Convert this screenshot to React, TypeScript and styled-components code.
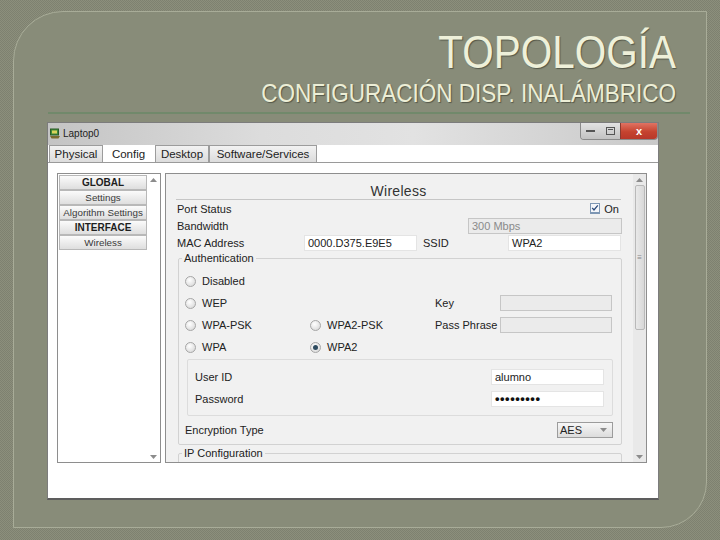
import styled, { createGlobalStyle } from 'styled-components'

const GlobalStyle = createGlobalStyle`
  html, body { margin: 0; padding: 0; }
  body {
    width: 720px;
    height: 540px;
    overflow: hidden;
    font-family: "Liberation Sans", Arial, sans-serif;
  }
`

const Slide = styled.div`
  width: 720px;
  height: 540px;
  box-sizing: border-box;
  padding: 11px 13px 12px 13px;
  background: repeating-conic-gradient(#8c8f7c 0 25%, #7e8170 0 50%) 0 0 / 2px 2px;
`

const Frame = styled.div`
  height: 100%;
  box-sizing: border-box;
  border: 1px solid #a8ac98;
  border-radius: 50px 0 46px 0;
  background: #888c79;
  display: flex;
  flex-direction: column;
`

const Title = styled.h1`
  margin: 17px 30px 0 0;
  font-size: 46px;
  line-height: 46px;
  font-weight: 400;
  text-align: right;
  color: #eef0d9;
  text-shadow: 1px 1px 1px #55584a;
  transform: scaleX(0.88);
  transform-origin: right center;
`

const Subtitle = styled.h2`
  margin: 6px 30px 0 0;
  font-size: 25px;
  line-height: 25px;
  font-weight: 400;
  text-align: right;
  color: #eceed6;
  text-shadow: 1px 1px 1px #55584a;
  transform: scaleX(0.9);
  transform-origin: right center;
`

const Rule = styled.div`
  margin: 6px 16px 0 34px;
  height: 2px;
  background: #71896b;
`

const Window = styled.div`
  margin: 8px 0 0 33px;
  width: 612px;
  height: 378px;
  box-sizing: border-box;
  border: 1px solid #7c7c7c;
  border-bottom: 2px solid #5d5d5d;
  background: #ffffff;
  display: flex;
  flex-direction: column;
  font-size: 11px;
  color: #222;
`

const TitleBar = styled.div`
  height: 22px;
  flex-shrink: 0;
  display: flex;
  align-items: flex-start;
  background: linear-gradient(90deg, #c4c4c4 0%, #dcdcdc 35%, #e2e2e2 60%, #c9c9c9 100%);
`

const TitleText = styled.div`
  display: flex;
  align-items: center;
  gap: 3px;
  height: 20px;
  padding-left: 2px;
  font-size: 10px;
  color: #222;
  flex: 1;
`

const WinButtons = styled.div`
  display: flex;
  height: 16px;
  border: 1px solid #8a8a8a;
  border-top: none;
  border-radius: 0 0 4px 4px;
  overflow: hidden;
`

const WinButton = styled.div<{ $close?: boolean; $w: number }>`
  width: ${p => p.$w}px;
  display: flex;
  align-items: center;
  justify-content: center;
  background: ${p => p.$close
    ? 'linear-gradient(#e07363, #c5432f 55%, #b8382a)'
    : 'linear-gradient(#e2e2e2, #c2c2c2)'};
  border-left: ${p => p.$close ? '1px solid #8a3a30' : 'none'};
  color: #fff;
  font-weight: 700;
  font-size: 11px;
`

const TabStrip = styled.div`
  height: 17px;
  flex-shrink: 0;
  display: flex;
  padding-left: 1px;
  border-bottom: 1px solid #9a9a9a;
`

const Tab = styled.div<{ $active?: boolean; $w: number }>`
  width: ${p => p.$w}px;
  box-sizing: border-box;
  margin-right: ${p => p.$active ? '1px' : '0'};
  border: 1px solid ${p => p.$active ? 'transparent' : '#9c9c9c'};
  border-bottom: none;
  background: ${p => p.$active ? '#ffffff' : 'linear-gradient(#f2f2f2, #dcdcdc)'};
  display: flex;
  align-items: center;
  justify-content: center;
  font-size: 11.5px;
  color: #222;
`

const Content = styled.div`
  display: flex;
  gap: 4px;
  padding: 10px 0 0 9px;
`

const Sidebar = styled.div`
  width: 104px;
  height: 290px;
  box-sizing: border-box;
  border: 1px solid #8e8e8e;
  display: flex;
`

const NavList = styled.div`
  width: 89px;
  padding: 1px 0 0 1px;
  display: flex;
  flex-direction: column;
`

const NavButton = styled.div<{ $bold?: boolean }>`
  height: 15px;
  flex-shrink: 0;
  box-sizing: border-box;
  border: 1px solid #b8b8b8;
  background: linear-gradient(#fbfbfb, #dedede);
  display: flex;
  align-items: center;
  justify-content: center;
  font-size: ${p => p.$bold ? '10px' : '9.8px'};
  font-weight: ${p => p.$bold ? 700 : 400};
  color: ${p => p.$bold ? '#1e1e1e' : '#3a3a3a'};
  white-space: nowrap;
`

const ScrollCol = styled.div<{ $bg?: string }>`
  width: 13px;
  margin-left: auto;
  display: flex;
  flex-direction: column;
  align-items: center;
  justify-content: space-between;
  padding: 4px 0 3px;
  box-sizing: border-box;
  background: ${p => p.$bg || 'transparent'};
`

const Thumb = styled.div`
  width: 10px;
  height: 145px;
  margin-top: 3px;
  box-sizing: border-box;
  border: 1px solid #b9b9b9;
  border-radius: 2px;
  background: linear-gradient(90deg, #e9e9e9, #d8d8d8);
  display: flex;
  align-items: center;
  justify-content: center;
  font-size: 8px;
  color: #888;
`

const Panel = styled.div`
  width: 482px;
  height: 290px;
  box-sizing: border-box;
  border: 1px solid #8e8e8e;
  background: #f1f1f1;
  display: flex;
`

const Main = styled.div`
  flex: 1;
  overflow: hidden;
  display: flex;
  flex-direction: column;
  & > * { flex-shrink: 0; }
`

const Heading = styled.div`
  height: 26px;
  box-sizing: border-box;
  margin: 0 12px 0 10px;
  padding-top: 10px;
  border-bottom: 1px solid #c6c6c6;
  text-align: center;
  font-size: 14px;
  line-height: 15px;
  letter-spacing: 0.3px;
  color: #333;
`

const Row = styled.div`
  height: 17px;
  margin: 0 11px;
  display: flex;
  align-items: center;
  justify-content: space-between;
`

const GridRow = styled.div`
  height: 17px;
  margin: 0 11px;
  display: grid;
  grid-template-columns: 127px 113px 6px 85px 113px;
  align-items: center;
`

const Field = styled.div<{ $disabled?: boolean; $w?: number }>`
  ${p => p.$w ? `width: ${p.$w}px;` : ''}
  height: 16px;
  box-sizing: border-box;
  border: 1px solid ${p => p.$disabled ? '#c6c6c6' : '#e4e4e4'};
  background: ${p => p.$disabled ? '#ebebeb' : '#ffffff'};
  color: ${p => p.$disabled ? '#8a8a8a' : '#222'};
  padding-left: 3px;
  display: flex;
  align-items: center;
  font-size: 11px;
`

const CheckWrap = styled.div`
  display: flex;
  align-items: center;
  gap: 4px;
  padding-right: 3px;
`

const Group = styled.fieldset<{ $top: number }>`
  margin: ${p => p.$top}px 0 0 12px;
  width: 444px;
  box-sizing: border-box;
  padding: 5px 8px 6px 6px;
  border: 1px solid #d2d2d2;
  border-radius: 2px;
  min-width: 0;
`

const Legend = styled.legend`
  padding: 0 2px;
  margin-left: -3px;
  font-size: 11px;
  line-height: 13px;
  color: #222;
`

const RadioGrid = styled.div`
  display: grid;
  grid-template-columns: 125px 125px 65px 112px;
  grid-auto-rows: 22px;
  align-items: center;
`

const Option = styled.div`
  display: flex;
  align-items: center;
  gap: 6px;
`

const Radio = styled.span<{ $on?: boolean }>`
  width: 11px;
  height: 11px;
  box-sizing: border-box;
  border-radius: 50%;
  border: 1px solid #a6a6a6;
  background: radial-gradient(circle at 40% 35%, #ffffff, #d2d2d2);
  display: inline-flex;
  align-items: center;
  justify-content: center;
  &::after {
    content: '';
    width: 5px;
    height: 5px;
    border-radius: 50%;
    background: ${p => p.$on ? '#2e4b60' : 'transparent'};
  }
`

const UserBox = styled.div`
  margin: 1px 0 0 2px;
  box-sizing: border-box;
  border: 1px solid #dcdcdc;
  border-radius: 2px;
  padding: 8px 8px 8px 7px;
  display: grid;
  grid-template-columns: 1fr 113px;
  grid-auto-rows: 17px;
  row-gap: 5px;
  align-items: center;
`

const Dots = styled.span`
  font-size: 13px;
  font-weight: 700;
  letter-spacing: 0.5px;
  color: #111;
`

const EncRow = styled.div`
  margin-top: 6px;
  display: flex;
  align-items: center;
  justify-content: space-between;
`

const Select = styled.div`
  width: 56px;
  height: 16px;
  box-sizing: border-box;
  border: 1px solid #9c9c9c;
  background: linear-gradient(#f7f7f7, #dcdcdc);
  display: flex;
  align-items: center;
  justify-content: space-between;
  padding: 0 5px 0 2px;
  font-size: 11px;
`

const Arrow = ({ down }: { down?: boolean }) => (
  <svg width="7" height="4" viewBox="0 0 7 4">
    <path d={down ? 'M0 0 H7 L3.5 4 Z' : 'M0 4 H7 L3.5 0 Z'} fill="#8c8c8c" />
  </svg>
)

const LaptopIcon = () => (
  <svg width="10" height="11" viewBox="0 0 10 11">
    <rect x="0.5" y="1" width="8" height="6" fill="#3f8a3a" stroke="#2a5a25" />
    <rect x="2" y="2.5" width="5" height="3" fill="#d9d35a" />
    <path d="M0 8 H10 L8.5 10.5 H1.5 Z" fill="#7a6a2e" />
  </svg>
)

const CheckBox = () => (
  <svg width="10" height="11" viewBox="0 0 10 11">
    <rect x="0.5" y="0.5" width="9" height="9" fill="#f4f6fa" stroke="#7e97b4" />
    <path d="M2.2 4.8 L4 7 L7.8 2.3" fill="none" stroke="#2b4a7a" strokeWidth="1.3" />
    <line x1="0" y1="10.5" x2="10" y2="10.5" stroke="#7e97b4" />
  </svg>
)

export default function App() {
  return (
    <>
      <GlobalStyle />
      <Slide>
        <Frame>
          <Title>TOPOLOGÍA</Title>
          <Subtitle>CONFIGURACIÓN DISP. INALÁMBRICO</Subtitle>
          <Rule />
          <Window>
            <TitleBar>
              <TitleText>
                <LaptopIcon />
                Laptop0
              </TitleText>
              <WinButtons>
                <WinButton $w={19}>
                  <svg width="9" height="3" viewBox="0 0 9 3"><rect x="0" y="0" width="9" height="2" fill="#555" /></svg>
                </WinButton>
                <WinButton $w={20}>
                  <svg width="9" height="8" viewBox="0 0 9 8"><rect x="0.5" y="0.5" width="8" height="7" fill="none" stroke="#555" /><rect x="2" y="2" width="5" height="1" fill="#555" /></svg>
                </WinButton>
                <WinButton $close $w={36}>x</WinButton>
              </WinButtons>
            </TitleBar>
            <TabStrip>
              <Tab $w={54}>Physical</Tab>
              <Tab $w={51} $active>Config</Tab>
              <Tab $w={54}>Desktop</Tab>
              <Tab $w={108}>Software/Services</Tab>
            </TabStrip>
            <Content>
              <Sidebar>
                <NavList>
                  <NavButton $bold>GLOBAL</NavButton>
                  <NavButton>Settings</NavButton>
                  <NavButton>Algorithm Settings</NavButton>
                  <NavButton $bold>INTERFACE</NavButton>
                  <NavButton>Wireless</NavButton>
                </NavList>
                <ScrollCol>
                  <Arrow />
                  <Arrow down />
                </ScrollCol>
              </Sidebar>
              <Panel>
                <Main>
                  <Heading>Wireless</Heading>
                  <Row>
                    <span>Port Status</span>
                    <CheckWrap><CheckBox />On</CheckWrap>
                  </Row>
                  <Row>
                    <span>Bandwidth</span>
                    <Field $disabled $w={154}>300 Mbps</Field>
                  </Row>
                  <GridRow>
                    <span>MAC Address</span>
                    <Field>0000.D375.E9E5</Field>
                    <span />
                    <span>SSID</span>
                    <Field>WPA2</Field>
                  </GridRow>
                  <Group $top={1}>
                    <Legend>Authentication</Legend>
                    <RadioGrid>
                      <Option><Radio />Disabled</Option>
                      <span /><span /><span />
                      <Option><Radio />WEP</Option>
                      <span />
                      <span>Key</span>
                      <Field $disabled />
                      <Option><Radio />WPA-PSK</Option>
                      <Option><Radio />WPA2-PSK</Option>
                      <span>Pass Phrase</span>
                      <Field $disabled />
                      <Option><Radio />WPA</Option>
                      <Option><Radio $on />WPA2</Option>
                      <span /><span />
                    </RadioGrid>
                    <UserBox>
                      <span>User ID</span>
                      <Field>alumno</Field>
                      <span>Password</span>
                      <Field><Dots>•••••••••</Dots></Field>
                    </UserBox>
                    <EncRow>
                      <span>Encryption Type</span>
                      <Select>AES<Arrow down /></Select>
                    </EncRow>
                  </Group>
                  <Group $top={2}>
                    <Legend>IP Configuration</Legend>
                    <RadioGrid />
                  </Group>
                </Main>
                <ScrollCol $bg="#e9e9e9">
                  <Arrow />
                  <Thumb>≡</Thumb>
                  <div style={{ flex: 1 }} />
                  <Arrow down />
                </ScrollCol>
              </Panel>
            </Content>
          </Window>
        </Frame>
      </Slide>
    </>
  )
}
